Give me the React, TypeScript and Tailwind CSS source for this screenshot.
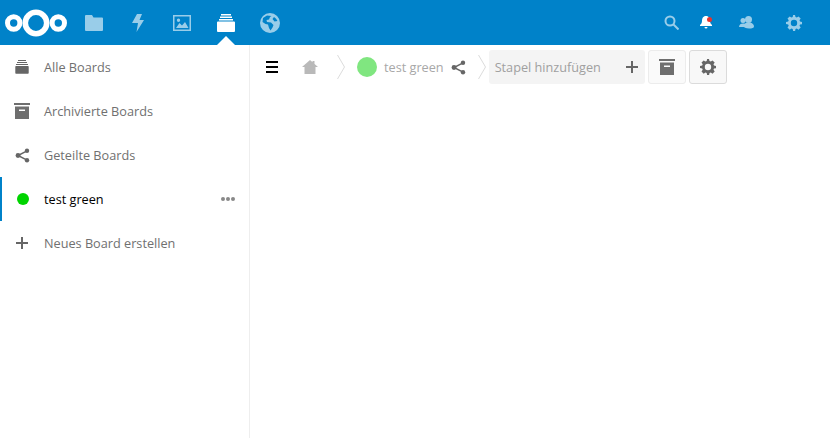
const gear =
  "M8 0h-.9l-.4 2.100-1.300.5L3.700 1.400 1.500 3.600l1.200 1.700-.5 1.300L0 7v2.100l2.200.4.5 1.300-1.200 1.700 2.200 2.200 1.700-1.200 1.300.5.4 2h2l.4-2 1.300-.5 1.700 1.200 2.200-2.200-1.200-1.700.5-1.300 2.200-.4V7l-2.200-.4-.5-1.300 1.200-1.700-2.200-2.200-1.700 1.200-1.300-.5L9 0H8zm0 4.800a3.200 3.200 0 1 1 0 6.400 3.200 3.200 0 0 1 0-6.400z";

function Logo() {
  return (
    <svg width="62" height="30" viewBox="0 0 62 30" fill="none" stroke="white">
      <circle cx="31" cy="15" r="10.700" strokeWidth="5.600" />
      <circle cx="8.700" cy="15" r="6.200" strokeWidth="5" />
      <circle cx="53.300" cy="15" r="6.200" strokeWidth="5" />
    </svg>
  );
}

function DeckIcon() {
  return (
    <svg width="18" height="18" viewBox="0 0 18 18" fill="currentColor">
      <rect x="4" y="0" width="10" height="1.500" />
      <rect x="3" y="2.500" width="12" height="1.500" />
      <rect x="2" y="5" width="14" height="1.500" />
      <path d="M1 7.500h16a1 1 0 0 1 1 1V17a1 1 0 0 1-1 1H1a1 1 0 0 1-1-1V8.500a1 1 0 0 1 1-1z" />
    </svg>
  );
}

function StackIcon() {
  return (
    <svg width="14" height="14" viewBox="0 0 14 14" fill="#666">
      <rect x="3" y="0" width="8" height="1" />
      <rect x="2" y="2" width="10" height="1" />
      <rect x="1" y="4" width="12" height="1" />
      <path d="M1 6h12a.7.7 0 0 1 .7.7v6.300a.7.7 0 0 1-.7.7H1a.7.7 0 0 1-.7-.7V6.700A.7.7 0 0 1 1 6z" />
    </svg>
  );
}

function ArchiveIcon() {
  return (
    <svg width="16" height="16" viewBox="0 0 16 16" fill="#6e6e6e">
      <rect x="0" y="0" width="16" height="2" />
      <path d="M1 3.500h14V16H1zM5 6.500v1.500h6V6.500z" fillRule="evenodd" />
    </svg>
  );
}

function ShareIcon() {
  return (
    <svg width="15" height="15" viewBox="0 0 15 15" fill="#666" stroke="#666">
      <path d="M12 2.800 3 7.500l9 4.700" fill="none" strokeWidth="1.500" />
      <circle cx="12" cy="2.800" r="2.200" stroke="none" />
      <circle cx="3" cy="7.500" r="2.400" stroke="none" />
      <circle cx="12" cy="12.200" r="2.200" stroke="none" />
    </svg>
  );
}

function PlusIcon() {
  return (
    <svg width="12" height="12" viewBox="0 0 12 12" fill="#666">
      <path d="M5 0h2v5h5v2H7v5H5V7H0V5h5z" />
    </svg>
  );
}

function Crumb() {
  return (
    <svg width="10" height="24" viewBox="0 0 10 24" fill="none" stroke="#dcdcdc" className="shrink-0">
      <path d="M1.500 0 8.500 12 1.500 24" />
    </svg>
  );
}

const navText = "pt-[2px] text-[12.7px] text-[#707070]";

export default function App() {
  return (
    <div className="flex h-[438px] w-[830px] flex-col overflow-hidden bg-white font-['Open_Sans',sans-serif]">
      <header className="relative flex h-[45px] shrink-0 items-center bg-[#0082c9]">
        <div className="ml-[5px] flex w-[62px] items-center">
          <Logo />
        </div>
        <nav className="ml-[5px] flex items-center text-white">
          <div className="flex w-[44px] justify-center opacity-60">
            <svg width="18" height="16" viewBox="0 0 18 16" fill="currentColor">
              <path d="M0 1a1 1 0 0 1 1-1h6l1.500 2.500H17a1 1 0 0 1 1 1V15a1 1 0 0 1-1 1H1a1 1 0 0 1-1-1z" />
            </svg>
          </div>
          <div className="flex w-[44px] justify-center opacity-60">
            <svg width="12" height="18" viewBox="0 0 12 18" fill="currentColor">
              <path d="M5 0h5L7.500 6H12L4.500 18 6 9H0z" />
            </svg>
          </div>
          <div className="flex w-[44px] justify-center opacity-60">
            <svg width="18" height="16" viewBox="0 0 18 16" fill="currentColor">
              <path
                fillRule="evenodd"
                d="M0 0h18v16H0zM1.500 1.500v13h15v-13zM3 13l3.500-5 2.500 2.500 3-3.500 3.500 6zM5.500 3.500a1.700 1.700 0 1 1 0 3.400 1.700 1.700 0 0 1 0-3.400z"
              />
            </svg>
          </div>
          <div className="flex w-[44px] justify-center">
            <DeckIcon />
          </div>
          <div className="flex w-[44px] justify-center opacity-60">
            <svg width="20" height="20" viewBox="0 0 20 20" fill="currentColor">
              <path
                fillRule="evenodd"
                d="M10 0a10 10 0 1 1 0 20 10 10 0 0 1 0-20zM7 2.500 3 5 2.500 9l3 2 2.500.5L9 15l1.500 2.500 2-3 1-2.500-2.500-2.500-4-.5-.5-2 2.500-.5 1-2.500 1.500-1zM14 4l-1.500 2 2 2.500 3-.5A8 8 0 0 0 14 4z"
              />
            </svg>
          </div>
        </nav>
        <div className="absolute bottom-0 left-[217px] h-0 w-0 border-x-[9px] border-b-[9px] border-x-transparent border-b-white" />
        <div className="ml-auto mr-[14px] flex items-center text-white">
          <div className="flex w-[38px] justify-center opacity-60">
            <svg width="15" height="15" viewBox="0 0 15 15" fill="none" stroke="currentColor">
              <circle cx="6" cy="6" r="4.500" strokeWidth="2" />
              <path d="m9.500 9.500 5 5" strokeWidth="2" />
            </svg>
          </div>
          <div className="relative flex w-[32px] justify-center">
            <svg width="12" height="13" viewBox="0 0 12 13" fill="currentColor">
              <path d="M6 0c3 0 4 2.500 4 5 0 2 1 3 2 4v1H0V9c1-1 2-2 2-4 0-2.500 1-5 4-5zM4.500 11h3a1.500 1.500 0 0 1-3 0z" />
            </svg>
            <div className="absolute left-[17px] top-[1px] h-[5px] w-[5px] rounded-full bg-[#e9322d]" />
          </div>
          <div className="flex w-[48px] justify-center opacity-60">
            <svg width="15" height="13" viewBox="0 0 15 13" fill="currentColor">
              <circle cx="4" cy="4.500" r="2.500" />
              <circle cx="9.500" cy="3.500" r="3.500" />
              <path d="M0 11c0-2.500 2-3.500 4-3.500S6 8 6 9v2zM4.500 10c0-2 2-3.500 5-3.500s5.500 1.500 5.500 4c0 1.500-2 2-5 2s-5.500-1-5.500-2.500z" />
            </svg>
          </div>
          <div className="ml-[2px] flex w-[44px] justify-center opacity-60">
            <svg width="16" height="16" viewBox="0 0 16 16" fill="currentColor">
              <path d={gear} fillRule="evenodd" />
            </svg>
          </div>
        </div>
      </header>

      <div className="flex min-h-0 flex-1">
        <aside className="w-[250px] shrink-0 border-r border-[#eeeeee]">
          <div className="flex h-[44px] items-center">
            <div className="flex w-[44px] justify-center">
              <StackIcon />
            </div>
            <span className={navText}>Alle Boards</span>
          </div>
          <div className="flex h-[44px] items-center">
            <div className="flex w-[44px] justify-center">
              <ArchiveIcon />
            </div>
            <span className={navText}>Archivierte Boards</span>
          </div>
          <div className="flex h-[44px] items-center">
            <div className="flex w-[44px] justify-center">
              <ShareIcon />
            </div>
            <span className={navText}>Geteilte Boards</span>
          </div>
          <div className="flex h-[44px] items-center border-l-2 border-[#0082c9]">
            <div className="flex w-[42px] justify-center">
              <div className="h-3 w-3 rounded-full bg-[#00d400]" />
            </div>
            <span className="pt-[2px] text-[12.7px] text-black">test green</span>
            <div className="ml-auto mr-[14px] flex gap-px">
              <div className="h-[4px] w-[4px] rounded-full bg-[#888]" />
              <div className="h-[4px] w-[4px] rounded-full bg-[#888]" />
              <div className="h-[4px] w-[4px] rounded-full bg-[#888]" />
            </div>
          </div>
          <div className="flex h-[44px] items-center">
            <div className="flex w-[44px] justify-center">
              <PlusIcon />
            </div>
            <span className={navText}>Neues Board erstellen</span>
          </div>
        </aside>

        <main className="flex h-[44px] flex-1 items-center pl-[16px]">
          <div className="flex w-[12px] flex-col gap-[3px]">
            <div className="h-[2px] bg-black" />
            <div className="h-[2px] bg-black" />
            <div className="h-[2px] bg-black" />
          </div>
          <svg width="16" height="14" viewBox="0 0 16 14" fill="#b9b9b9" className="ml-[24px]">
            <path d="M8 0 16 7h-2.500v7h-11V7H0zM10.500 1h2v3l-2-1.800z" />
          </svg>
          <div className="ml-[18px] flex">
            <Crumb />
          </div>
          <div className="ml-[11px] h-5 w-5 rounded-full bg-[#80e680]" />
          <span className="ml-[7px] pt-[2px] text-[12.7px] text-[#a8a8a8]">test green</span>
          <div className="ml-[7px] flex">
            <ShareIcon />
          </div>
          <div className="ml-[11px] flex">
            <Crumb />
          </div>
          <div className="ml-[2px] flex h-[34px] w-[156px] shrink-0 items-center justify-between rounded-[3px] bg-[#f4f4f4] pl-[6px] pr-[7px]">
            <span className="pt-[2px] text-[12.7px] text-[#a0a0a0]">Stapel hinzufügen</span>
            <PlusIcon />
          </div>
          <div className="ml-[3px] flex h-[34px] w-[38px] items-center justify-center rounded-[3px] border border-[#ececec] bg-[#fafafa]">
            <ArchiveIcon />
          </div>
          <div className="ml-[3px] flex h-[34px] w-[38px] items-center justify-center rounded-[3px] border border-[#dbdbdb] bg-[#f8f8f8]">
            <svg width="16" height="16" viewBox="0 0 16 16" fill="#666">
              <path d={gear} fillRule="evenodd" />
            </svg>
          </div>
        </main>
      </div>
    </div>
  );
}
